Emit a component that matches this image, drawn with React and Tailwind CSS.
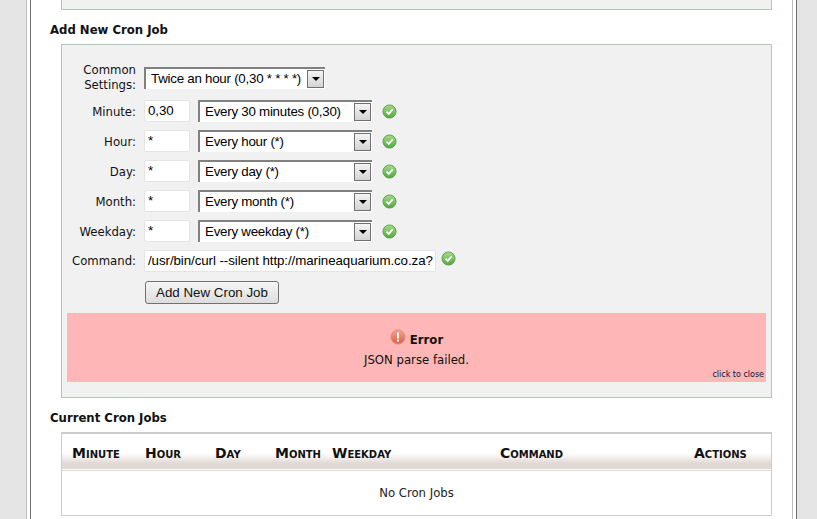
import React from "react";

const verdana = "font-['DejaVu_Sans',sans-serif]";
const arial = "font-['Liberation_Sans',Arial,sans-serif]";

function Check({ className = "" }) {
  return (
    <svg width="15" height="15" viewBox="0 0 16 16" className={className}>
      <defs>
        <linearGradient id="chk" x1="0" y1="0" x2="0" y2="1">
          <stop offset="0" stopColor="#a6dc8c" />
          <stop offset="1" stopColor="#4fa83d" />
        </linearGradient>
      </defs>
      <circle cx="8" cy="8" r="7" fill="url(#chk)" stroke="#5f9e50" strokeWidth="1" />
      <path d="M4.8 8.2 L7.2 10.6 L11.4 5.8" fill="none" stroke="#fff" strokeWidth="1.9" />
    </svg>
  );
}

function ErrorIcon() {
  return (
    <svg width="16" height="16" viewBox="0 0 16 16">
      <defs>
        <linearGradient id="err" x1="0" y1="0" x2="0" y2="1">
          <stop offset="0" stopColor="#f4a08c" />
          <stop offset="1" stopColor="#de5f48" />
        </linearGradient>
      </defs>
      <circle cx="8" cy="8" r="7" fill="url(#err)" stroke="#e08a78" strokeWidth="1" />
      <rect x="7" y="3.5" width="2" height="6" fill="#fff" />
      <rect x="7" y="10.6" width="2" height="2" fill="#fff" />
    </svg>
  );
}

function Select({ text, className }) {
  return (
    <div className={`${className} ${arial} h-[22px] flex items-center justify-between bg-white border-t-2 border-l-2 border-t-[#808080] border-l-[#808080] text-[13.33px] tracking-[-0.25px] text-black pl-[5px] pr-[1px] shrink-0`}>
      <span className="whitespace-nowrap">{text}</span>
      <span className="w-[17px] h-[18px] border border-[#707070] bg-gradient-to-b from-[#f4f4f4] to-[#d4d4d4] flex items-center justify-center shrink-0">
        <span className="w-0 h-0 border-l-[4px] border-r-[4px] border-t-[4px] border-l-transparent border-r-transparent border-t-black" />
      </span>
    </div>
  );
}

function Field({ children, className = "" }) {
  return (
    <div className={`${arial} h-[22px] bg-white border border-[#e4e4e4] rounded-[2px] text-[13.33px] tracking-[-0.08px] text-black pl-[3px] flex items-center whitespace-nowrap overflow-hidden shrink-0 ${className}`}>
      {children}
    </div>
  );
}

function Label({ children, className = "" }) {
  return (
    <div className={`${verdana} w-[69px] text-right text-[11.7px] leading-[15px] text-[#111] shrink-0 ${className}`}>{children}</div>
  );
}

function TimeRow({ label, value, option }) {
  return (
    <div className="h-[30px] flex items-center gap-2">
      <Label className="pt-[2px]">{label}</Label>
      <Field className="w-[46px]">{value}</Field>
      <Select text={option} className="w-[174px]" />
      <Check className="ml-[2px]" />
    </div>
  );
}

function Th({ children, className }) {
  return (
    <th className={`${className} p-0 pt-[3px] font-bold text-[14px] [font-variant:small-caps] text-[#111]`}>
      {children}
    </th>
  );
}

export default function App() {
  return (
    <div className={`${verdana} w-[817px] h-[519px] overflow-hidden bg-[#e5e5e5] pl-[26px]`}>
      <div className="w-[771px] h-full bg-white border-l border-l-[#bdbdbd] border-r border-r-[#6e6e6e] px-[3px]">
        <div className="h-full border-l border-l-[#6e6e6e] border-r border-r-[#bdbdbd] pl-[19px]">
          <div className="ml-[11px] w-[711px] h-[10px] bg-[#f1f1f1] border-x border-b border-[#aec9b5]" />
          <h2 className="text-[11.7px] leading-[14px] font-bold text-[#111] mt-[13px] h-[21px]">Add New Cron Job</h2>
          <div className="ml-[11px] w-[711px] h-[354px] bg-[#f1f1f1] border border-[#aec9b5] px-[5px] pt-[18px]">
            <div className="h-[30px] flex items-center gap-2">
              <Label>Common Settings:</Label>
              <Select text="Twice an hour (0,30 * * * *)" className="w-[181px]" />
            </div>
            <div className="mt-[3px]">
              <TimeRow label="Minute:" value="0,30" option="Every 30 minutes (0,30)" />
              <TimeRow label="Hour:" value="*" option="Every hour (*)" />
              <TimeRow label="Day:" value="*" option="Every day (*)" />
              <TimeRow label="Month:" value="*" option="Every month (*)" />
              <TimeRow label="Weekday:" value="*" option="Every weekday (*)" />
            </div>
            <div className="h-[30px] flex items-center gap-2">
              <Label className="pt-[1px]">Command:</Label>
              <Field className="w-[292px]">/usr/bin/curl --silent http://marineaquarium.co.za?</Field>
              <Check className="ml-[-3px] mt-[-6px]" />
            </div>
            <button className={`${arial} ml-[78px] mt-[5px] w-[134px] h-[23px] block border border-[#707070] rounded-[3px] bg-gradient-to-b from-[#f6f6f6] to-[#dcdcdc] text-[13.33px] leading-none text-[#111]`}>
              Add New Cron Job
            </button>
            <div className="mt-[9px] h-[69px] bg-[#ffb6b6] flex flex-col items-center relative text-[#111]">
              <div className="flex items-center gap-[4px] mt-[16px] h-[16px]">
                <ErrorIcon />
                <span className="text-[11.7px] font-bold mt-[8px]">Error</span>
              </div>
              <div className="text-[11.7px] leading-[14px] mt-[8px]">JSON parse failed.</div>
              <div className="absolute right-[2px] bottom-[2px] text-[8px] leading-[10px] text-[#0a1440]">click to close</div>
            </div>
          </div>
          <h2 className="text-[11.7px] leading-[14px] font-bold text-[#111] mt-[13px] h-[21px]">Current Cron Jobs</h2>
          <div className="ml-[11px] w-[711px] border-x border-b border-t-2 border-[#cccccc] bg-white">
            <table className="w-full table-fixed border-collapse">
              <thead>
                <tr className="h-[36px] bg-gradient-to-b from-white from-55% to-[#e0d8d3] to-85% border-b border-[#e0d8d3]">
                  <Th className="w-[83px] text-left pl-[10px]">Minute</Th>
                  <Th className="w-[70px] text-left">Hour</Th>
                  <Th className="w-[60px] text-left">Day</Th>
                  <Th className="w-[57px] text-left">Month</Th>
                  <Th className="w-[120px] text-left">Weekday</Th>
                  <Th className="w-[197px] text-center pr-[38px]">Command</Th>
                  <Th className="text-left pl-[45px]">Actions</Th>
                </tr>
              </thead>
              <tbody>
                <tr className="h-[45px]">
                  <td colSpan={7} className="text-center pt-[3px] text-[11.7px] text-[#222]">No Cron Jobs</td>
                </tr>
              </tbody>
            </table>
          </div>
        </div>
      </div>
    </div>
  );
}
